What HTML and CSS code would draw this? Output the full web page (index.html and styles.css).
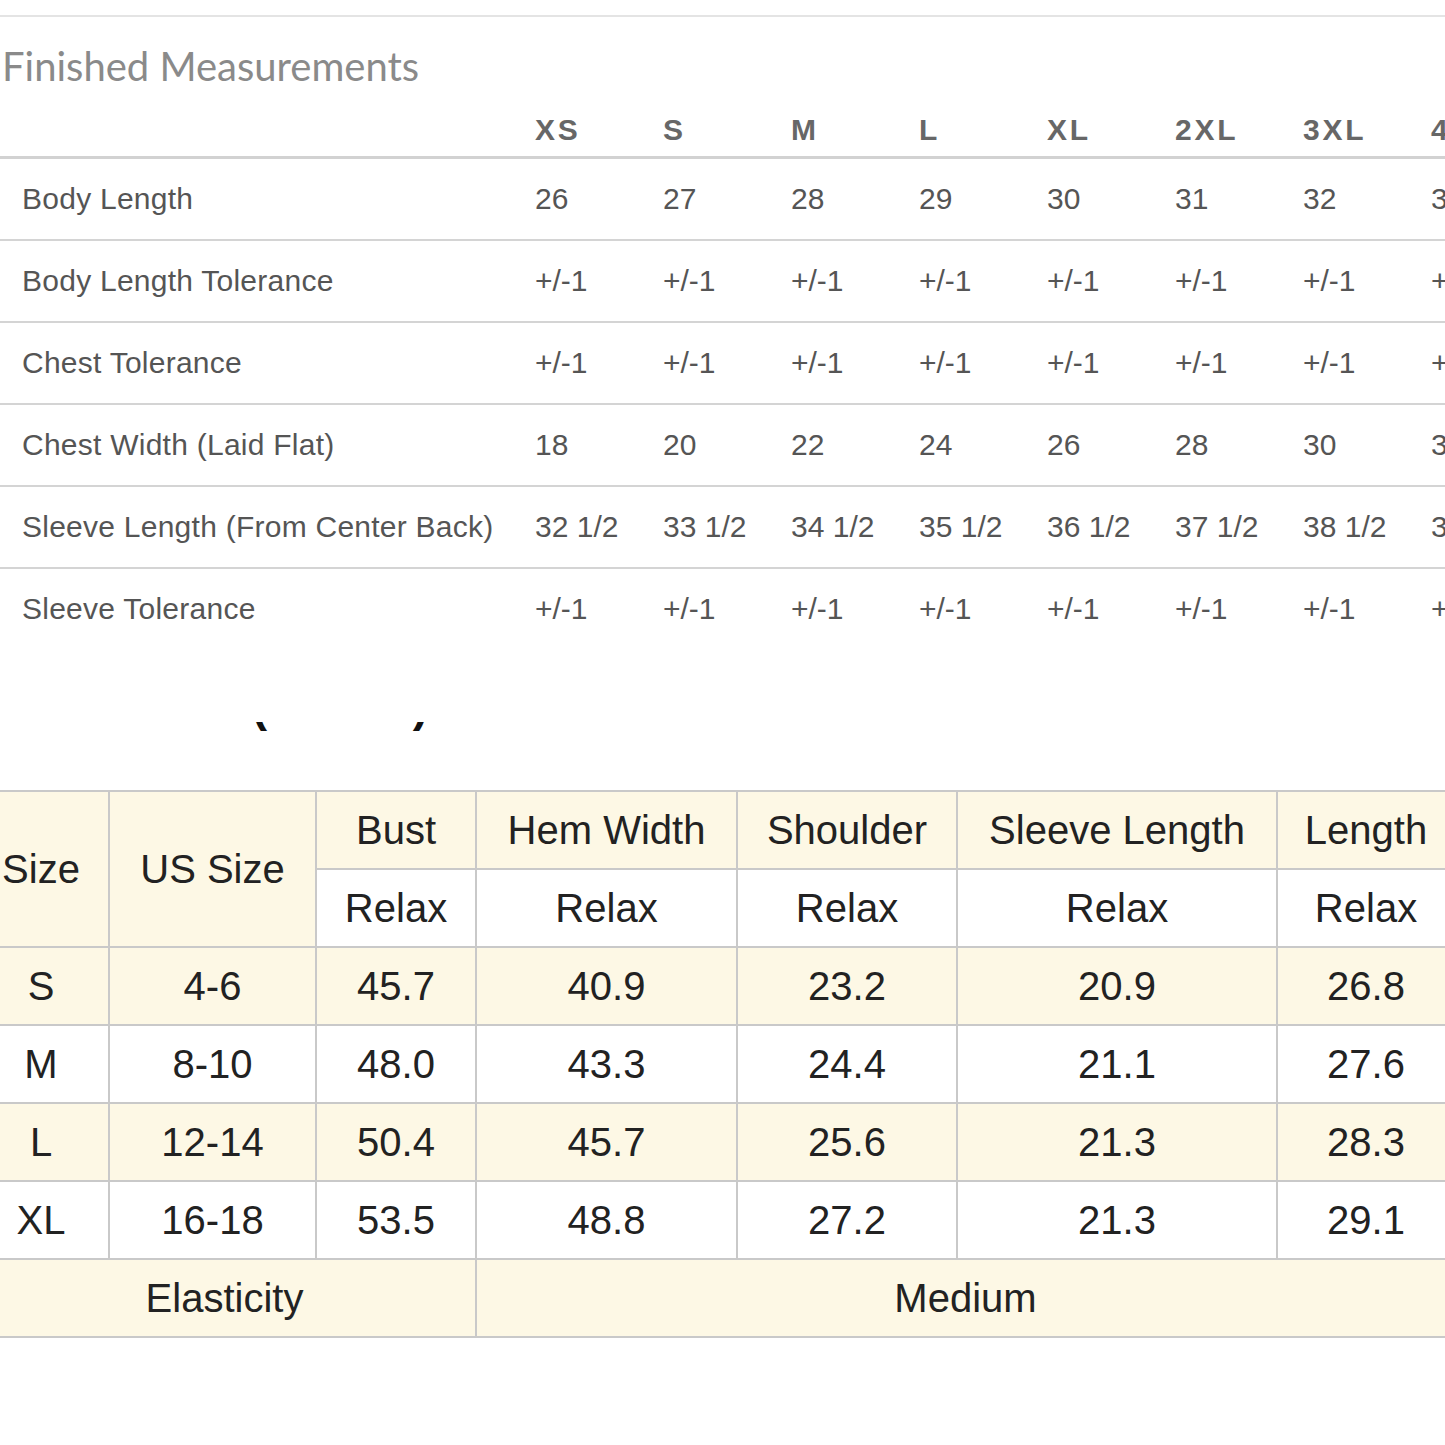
FILE: index.html
```html
<!DOCTYPE html>
<html lang="en">
<head>
<meta charset="utf-8">
<title>Finished Measurements</title>
<link rel="stylesheet" href="styles.css">
</head>
<body>
<div class="page">
  <div class="top-rule"></div>
  <h2 class="heading">Finished Measurements</h2>
  <table class="fm">
    <thead>
      <tr>
        <th class="lbl"></th>
        <th>XS</th><th>S</th><th>M</th><th>L</th><th>XL</th><th>2XL</th><th>3XL</th><th>4XL</th><th>5XL</th>
      </tr>
    </thead>
    <tbody>
      <tr><td class="lbl">Body Length</td><td>26</td><td>27</td><td>28</td><td>29</td><td>30</td><td>31</td><td>32</td><td>33</td><td>34</td></tr>
      <tr><td class="lbl">Body Length Tolerance</td><td>+/-1</td><td>+/-1</td><td>+/-1</td><td>+/-1</td><td>+/-1</td><td>+/-1</td><td>+/-1</td><td>+/-1</td><td>+/-1</td></tr>
      <tr><td class="lbl">Chest Tolerance</td><td>+/-1</td><td>+/-1</td><td>+/-1</td><td>+/-1</td><td>+/-1</td><td>+/-1</td><td>+/-1</td><td>+/-1</td><td>+/-1</td></tr>
      <tr><td class="lbl">Chest Width (Laid Flat)</td><td>18</td><td>20</td><td>22</td><td>24</td><td>26</td><td>28</td><td>30</td><td>32</td><td>34</td></tr>
      <tr><td class="lbl">Sleeve Length (From Center Back)</td><td>32 1/2</td><td>33 1/2</td><td>34 1/2</td><td>35 1/2</td><td>36 1/2</td><td>37 1/2</td><td>38 1/2</td><td>39 1/2</td><td>40 1/2</td></tr>
      <tr class="last"><td class="lbl">Sleeve Tolerance</td><td>+/-1</td><td>+/-1</td><td>+/-1</td><td>+/-1</td><td>+/-1</td><td>+/-1</td><td>+/-1</td><td>+/-1</td><td>+/-1</td></tr>
    </tbody>
  </table>

  <div class="clip-title"><div class="clip-inner">Size Chart (Inches)</div></div>

  <table class="sc">
    <colgroup>
      <col class="c1"><col class="c2"><col class="c3"><col class="c4"><col class="c5"><col class="c6"><col class="c7">
    </colgroup>
    <tbody>
      <tr class="cream">
        <td rowspan="2">Size</td>
        <td rowspan="2">US Size</td>
        <td>Bust</td><td>Hem Width</td><td>Shoulder</td><td>Sleeve Length</td><td>Length</td>
      </tr>
      <tr class="white">
        <td>Relax</td><td>Relax</td><td>Relax</td><td>Relax</td><td>Relax</td>
      </tr>
      <tr class="cream"><td>S</td><td>4-6</td><td>45.7</td><td>40.9</td><td>23.2</td><td>20.9</td><td>26.8</td></tr>
      <tr class="white"><td>M</td><td>8-10</td><td>48.0</td><td>43.3</td><td>24.4</td><td>21.1</td><td>27.6</td></tr>
      <tr class="cream"><td>L</td><td>12-14</td><td>50.4</td><td>45.7</td><td>25.6</td><td>21.3</td><td>28.3</td></tr>
      <tr class="white"><td>XL</td><td>16-18</td><td>53.5</td><td>48.8</td><td>27.2</td><td>21.3</td><td>29.1</td></tr>
      <tr class="cream"><td colspan="3">Elasticity</td><td colspan="4">Medium</td></tr>
    </tbody>
  </table>
</div>
</body>
</html>
```

FILE: styles.css
```css
html, body {
  margin: 0;
  padding: 0;
  background: #ffffff;
}

.page {
  width: 1445px;
  overflow: hidden;
  padding-bottom: 100px;
}

.top-rule {
  margin-top: 15px;
  height: 2px;
  background: #e4e4e4;
}

.heading {
  margin: 24px 0 0 2px;
  font-family: Lato, "Open Sans", sans-serif;
  font-weight: 400;
  font-size: 40px;
  line-height: 50px;
  color: #8a8a8a;
  white-space: nowrap;
}

/* Finished measurements table */
.fm {
  border-collapse: collapse;
  table-layout: fixed;
  width: 1687px;
  font-family: "Liberation Sans", Arial, sans-serif;
}

.fm th,
.fm td {
  width: 128px;
  padding: 0;
  text-align: left;
  white-space: nowrap;
}

.fm .lbl {
  width: 513px;
  padding-left: 22px;
}

.fm thead th {
  height: 53px;
  padding-top: 12px;
  vertical-align: middle;
  font-size: 30px;
  font-weight: 700;
  letter-spacing: 2.8px;
  color: #676767;
  border-bottom: 3px solid #d2d2d2;
}

.fm thead th.lbl {
  padding-left: 22px;
}

.fm tbody td {
  height: 80px;
  vertical-align: middle;
  font-size: 30px;
  color: #555555;
  border-bottom: 2px solid #d4d4d4;
}

.fm tbody td.lbl {
  letter-spacing: 0.25px;
}

.fm tbody tr.last td {
  border-bottom: none;
}

/* clipped title remnant */
.clip-title {
  margin-top: 73px;
  height: 12px;
  overflow: hidden;
}

.clip-inner {
  margin-top: -40px;
  padding-left: 14px;
  font-family: "Liberation Sans", Arial, sans-serif;
  font-weight: 700;
  font-size: 46px;
  line-height: 46px;
  color: #111111;
  white-space: nowrap;
}

/* size chart table */
.sc {
  margin-top: 56px;
  margin-left: -28px;
  border-collapse: collapse;
  table-layout: fixed;
  width: 1482px;
  font-family: "Liberation Sans", Arial, sans-serif;
  font-size: 40px;
  color: #222222;
}

.sc .c1 { width: 136px; }
.sc .c2 { width: 207px; }
.sc .c3 { width: 160px; }
.sc .c4 { width: 261px; }
.sc .c5 { width: 220px; }
.sc .c6 { width: 320px; }
.sc .c7 { width: 178px; }

.sc td {
  height: 76px;
  padding: 0;
  text-align: center;
  vertical-align: middle;
  border: 2px solid #c9c9c9;
  white-space: nowrap;
  line-height: 1;
}

.sc tr.cream td {
  background: #fdf8e5;
}

.sc tr.white td {
  background: #ffffff;
}

.sc td[rowspan] {
  background: #fdf8e5;
}
```
